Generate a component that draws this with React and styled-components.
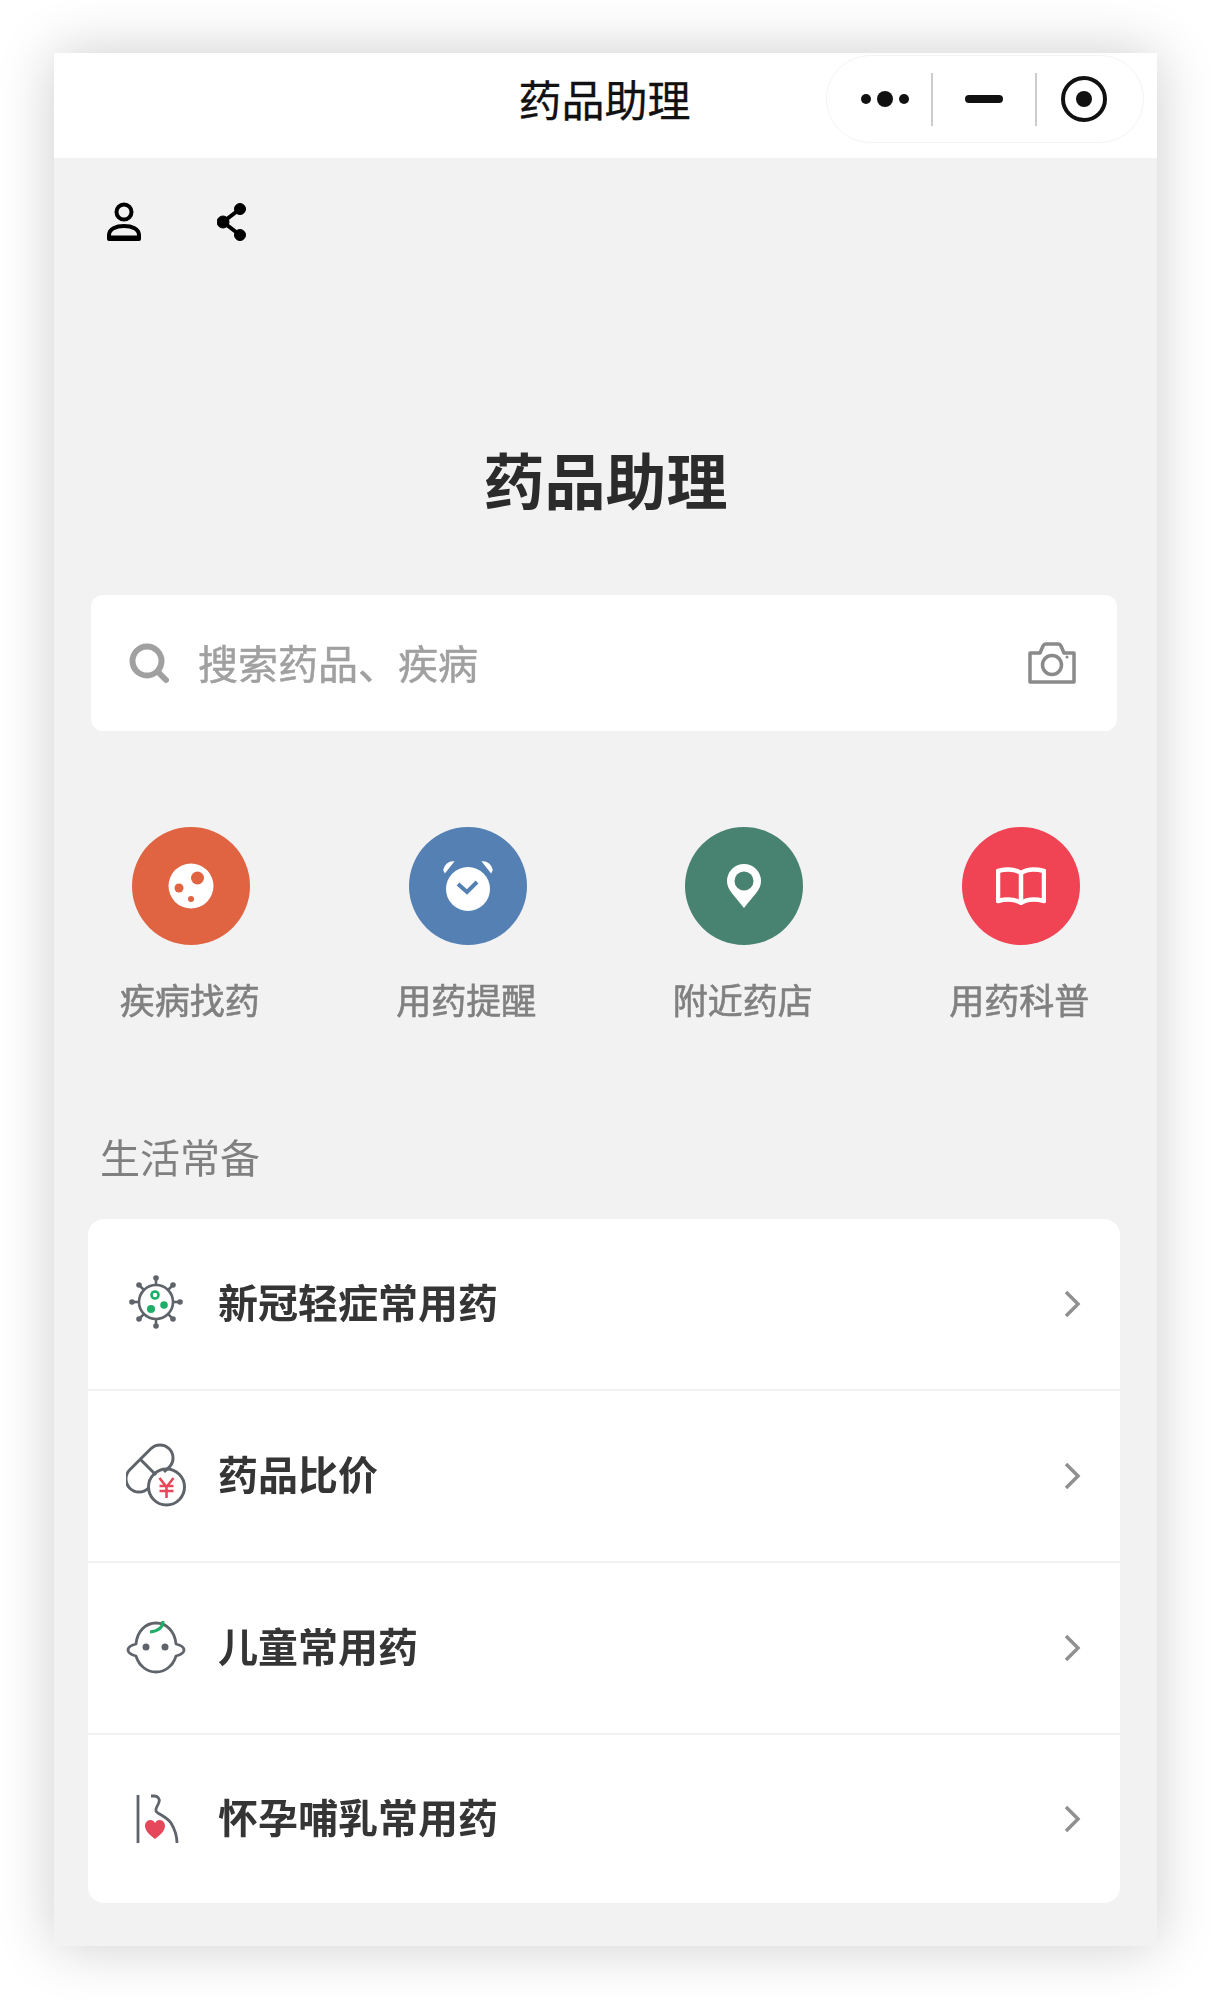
import React from "react";
import styled, { createGlobalStyle } from "styled-components";

const Global = createGlobalStyle`
  html, body { margin: 0; padding: 0; background: #fff; }
  body { font-family: "Noto Sans CJK SC", "Noto Sans", sans-serif; }
  * { box-sizing: border-box; }
`;

const Page = styled.div`
  height: 2000px;
  padding: 53px 54px 0;
  overflow: hidden;
  filter: blur(0.6px);
`;

const Phone = styled.div`
  width: 1103px;
  height: 1893px;
  background: #f2f2f2;
  box-shadow: 0 0 54px rgba(0, 0, 0, 0.2);
`;

const Header = styled.header`
  position: relative;
  height: 105px;
  background: #fff;
  display: flex;
  align-items: center;
  justify-content: center;
`;

const HeaderTitle = styled.h1`
  margin: 0;
  padding: 0 2px 16px 0;
  font-size: 43px;
  font-weight: 400;
  line-height: 60px;
  color: #111;
  -webkit-text-stroke: 0.3px #111;
`;

const Capsule = styled.div`
  position: absolute;
  left: 772px;
  top: 2px;
  width: 318px;
  height: 88px;
  border: 1px solid #f4f4f4;
  border-radius: 44px;
  display: flex;
  align-items: center;
`;

const CapsuleCell = styled.div`
  width: ${(p) => p.$w}px;
  height: 53px;
  padding-left: ${(p) => p.$pad || 0}px;
  display: flex;
  align-items: center;
  justify-content: center;
  border-right: ${(p) => (p.$line ? "2px solid #ccc" : "none")};
  svg { display: block; }
`;

const Content = styled.main`
  display: flex;
  flex-direction: column;
`;

const TopIcons = styled.div`
  display: flex;
  gap: 75px;
  padding: 44px 0 0 52px;
  height: 84px;
`;

const Heading = styled.h2`
  margin: 197px 0 0;
  text-align: center;
  font-size: 61px;
  line-height: 80px;
  font-weight: 700;
  color: #2b2b2b;
`;

const SearchBar = styled.div`
  margin: 76px 0 0 37px;
  width: 1026px;
  height: 136px;
  background: #fff;
  border-radius: 12px;
  display: flex;
  align-items: center;
  padding: 0 40px 0 38px;
`;

const SearchText = styled.span`
  flex: 1;
  margin-left: 29px;
  padding-bottom: 2px;
  font-size: 40px;
  line-height: 56px;
  color: #a0a0a0;
  -webkit-text-stroke: 0.5px #a0a0a0;
`;

const Shortcuts = styled.nav`
  margin: 96px 0 0 -1px;
  display: grid;
  grid-template-columns: repeat(4, 276.5px);
`;

const Shortcut = styled.div`
  display: flex;
  flex-direction: column;
  align-items: center;
`;

const Circle = styled.div`
  width: 118px;
  height: 118px;
  border-radius: 50%;
  background: ${(p) => p.$color};
  display: flex;
  align-items: center;
  justify-content: center;
`;

const ShortcutLabel = styled.span`
  margin-top: 29px;
  padding-right: 3px;
  font-size: 35px;
  line-height: 50px;
  font-weight: 400;
  color: #808080;
  -webkit-text-stroke: 0.6px #808080;
`;

const SectionTitle = styled.h3`
  margin: 107px 0 0 46px;
  font-size: 40px;
  line-height: 50px;
  font-weight: 400;
  color: #808080;
`;

const Card = styled.section`
  margin: 38px 0 0 34px;
  width: 1032px;
  background: #fff;
  border-radius: 16px;
`;

const Row = styled.div`
  height: 172px;
  display: flex;
  align-items: center;
  padding: 0 38px;
  border-top: 2px solid #f2f2f2;

  &:first-child {
    height: 170px;
    border-top: none;
  }

  &:last-child {
    height: 170px;
  }
`;

const RowIcon = styled.div`
  width: 60px;
  height: 68px;
  margin-right: 32px;
  display: flex;
  align-items: center;
  justify-content: center;
`;

const RowLabel = styled.span`
  flex: 1;
  padding-bottom: 6px;
  font-size: 40px;
  line-height: 56px;
  font-weight: 700;
  color: #353535;
`;

const Person = () => (
  <svg width="36" height="40" viewBox="0 0 36 40" fill="none" stroke="#000" strokeWidth="4">
    <circle cx="18" cy="10" r="7.500" />
    <path d="M3 37v-4c0-6 7-9 15-9s15 3 15 9v4z" strokeLinejoin="round" />
    <path d="M3 36h30" strokeWidth="5" />
  </svg>
);

const Share = () => (
  <svg width="30" height="40" viewBox="0 0 30 40" fill="#000" stroke="#000">
    <path d="M23 7 6 20l17 13" fill="none" strokeWidth="4" />
    <circle cx="23" cy="7" r="5.500" />
    <circle cx="6" cy="20" r="6" />
    <circle cx="23" cy="33" r="5.500" />
  </svg>
);

const SearchIcon = () => (
  <svg width="40" height="42" viewBox="0 0 40 42" fill="none" stroke="#a0a0a0">
    <circle cx="18" cy="19" r="14.500" strokeWidth="6" />
    <path d="M29 30l8 8" strokeWidth="6" strokeLinecap="round" />
  </svg>
);

const Camera = () => (
  <svg width="50" height="44" viewBox="0 0 50 44" fill="none" stroke="#8a8a8a" strokeWidth="3.500">
    <path d="M3 12h10l3-7c.5-1 1-2 3-2h12c2 0 2.500 1 3 2l3 7h10v29H3z" strokeLinejoin="round" />
    <circle cx="25" cy="24" r="9.500" />
    <circle cx="40" cy="16" r="1.500" fill="#8a8a8a" stroke="none" />
  </svg>
);

const Germ = () => (
  <svg width="46" height="46" viewBox="0 0 46 46">
    <circle cx="23" cy="23" r="22.500" fill="#fff" />
    <circle cx="29.500" cy="15" r="6.500" fill="#e06342" />
    <circle cx="11" cy="25" r="4.500" fill="#e06342" />
    <circle cx="23" cy="36" r="3" fill="#e06342" />
  </svg>
);

const Alarm = () => (
  <svg width="52" height="50" viewBox="0 0 52 50">
    <circle cx="26" cy="28" r="22" fill="#fff" />
    <path d="M2 9c1-5 5-8 9-8l-8 10zM50 9c-1-5-5-8-9-8l8 10z" fill="#fff" stroke="#fff" strokeWidth="1.500" />
    <path d="M16 23l9 8 10-10" fill="none" stroke="#5580b3" strokeWidth="4" />
  </svg>
);

const Pin = () => (
  <svg width="36" height="46" viewBox="0 0 36 46">
    <path d="M18 45C8 32 1 27 1 18a17 17 0 0 1 34 0c0 9-7 14-17 27z" fill="#fff" />
    <circle cx="18" cy="18" r="9.500" fill="#488270" />
  </svg>
);

const Book = () => (
  <svg width="50" height="38" viewBox="0 0 50 38" fill="none" stroke="#fff" strokeWidth="4.500" strokeLinejoin="round">
    <path d="M2 4c8-2 17-2 23 2 6-4 15-4 23-2v30c-8-2-17-2-23 2-6-4-15-4-23-2z" />
    <path d="M25 6v30" />
  </svg>
);

const spikes = [
  [30, 4],
  [30, 52],
  [6, 28],
  [54, 28],
  [13, 11],
  [47, 11],
  [13, 45],
  [47, 45],
];

const Virus = () => (
  <svg width="60" height="60" viewBox="0 0 60 60" fill="none" stroke="#5f646b" strokeWidth="2.600">
    <circle cx="30" cy="28" r="17" />
    {spikes.map(([x, y]) => (
      <g key={`${x}-${y}`}>
        <path d={`M${x} ${y}L${x + (30 - x) * 0.3} ${y + (28 - y) * 0.3}`} />
        <circle cx={x} cy={y} r="2.800" fill="#5f646b" stroke="none" />
      </g>
    ))}
    <circle cx="29" cy="21" r="3.500" stroke="#1fae6a" strokeWidth="2.600" />
    <circle cx="25" cy="35" r="4" fill="#1fae6a" stroke="none" />
    <circle cx="38" cy="31" r="3.800" fill="#1fae6a" stroke="none" />
  </svg>
);

const PillYen = () => (
  <svg width="60" height="68" viewBox="0 0 60 68" fill="none" stroke="#5f646b" strokeWidth="3">
    <path d="M38 30l5.200-4.800A13 13 0 0 0 24.800 6.800L3.800 27.800A13 13 0 0 0 22.200 46.200" />
    <path d="M15 18l15 15" />
    <circle cx="40.500" cy="45" r="18" />
    <path d="M33.500 36l7 9 7-9M33.500 44h14M33.500 49h14M40.500 44v12" stroke="#e5485a" strokeWidth="2.600" />
  </svg>
);

const Baby = () => (
  <svg width="60" height="56" viewBox="0 0 60 56" fill="none" stroke="#5f646b" strokeWidth="2.800">
    <path d="M10 24C11 12 19 3 30 3s19 9 20 21c4 1 8 3 8 6s-4 5-8 6c-3 10-11 16-20 16S13 46 10 36c-4-1-8-3-8-6s4-5 8-6z" strokeLinejoin="round" />
    <circle cx="20" cy="27" r="3.500" fill="#5f646b" stroke="none" />
    <circle cx="39" cy="27" r="3.500" fill="#5f646b" stroke="none" />
    <path d="M37 1c0 6-4 10-13 11" stroke="#1fae6a" strokeWidth="3" />
  </svg>
);

const Maternity = () => (
  <svg width="60" height="50" viewBox="-9 0 60 50" fill="none" stroke="#5f646b" strokeWidth="2.800">
    <path d="M3 1v48" />
    <path d="M16 2h3c4 0 6 3 5 6-1 4-4 6-3 9 1 3 10 5 15 12 3 5 6 12 6 20" />
    <path d="M20 45c-5-4-10-8-10-13 0-3 2-6 5.500-6 2 0 3.500 1 4.500 3 1-2 2.500-3 4.500-3 3.500 0 5.500 3 5.500 6 0 5-5 9-10 13z" fill="#e5485a" stroke="none" />
  </svg>
);

const Chevron = () => (
  <svg width="18" height="28" viewBox="0 0 18 28" fill="none" stroke="#909090" strokeWidth="3.500">
    <path d="M2 2l12 12L2 26" />
  </svg>
);

const shortcuts = [
  { label: "疾病找药", color: "#e06342", icon: <Germ /> },
  { label: "用药提醒", color: "#5580b3", icon: <Alarm /> },
  { label: "附近药店", color: "#488270", icon: <Pin /> },
  { label: "用药科普", color: "#f04353", icon: <Book /> },
];

const rows = [
  { label: "新冠轻症常用药", icon: <Virus /> },
  { label: "药品比价", icon: <PillYen /> },
  { label: "儿童常用药", icon: <Baby /> },
  { label: "怀孕哺乳常用药", icon: <Maternity /> },
];

export default function App() {
  return (
    <Page>
      <Global />
      <Phone>
        <Header>
          <HeaderTitle>药品助理</HeaderTitle>
          <Capsule>
            <CapsuleCell $w={106} $line $pad={12}>
              <svg width="48" height="16" viewBox="0 0 48 16" fill="#111">
                <circle cx="5" cy="8" r="5" />
                <circle cx="24" cy="8" r="8" />
                <circle cx="43" cy="8" r="5" />
              </svg>
            </CapsuleCell>
            <CapsuleCell $w={104} $line>
              <svg width="38" height="8" viewBox="0 0 38 8" fill="#111">
                <rect width="38" height="8" rx="4" />
              </svg>
            </CapsuleCell>
            <CapsuleCell $w={94}>
              <svg width="46" height="46" viewBox="0 0 46 46" fill="none" stroke="#111" strokeWidth="4">
                <circle cx="23" cy="23" r="21" />
                <circle cx="23" cy="23" r="8" fill="#111" stroke="none" />
              </svg>
            </CapsuleCell>
          </Capsule>
        </Header>
        <Content>
          <TopIcons>
            <Person />
            <Share />
          </TopIcons>
          <Heading>药品助理</Heading>
          <SearchBar>
            <SearchIcon />
            <SearchText>搜索药品、疾病</SearchText>
            <Camera />
          </SearchBar>
          <Shortcuts>
            {shortcuts.map((s) => (
              <Shortcut key={s.label}>
                <Circle $color={s.color}>{s.icon}</Circle>
                <ShortcutLabel>{s.label}</ShortcutLabel>
              </Shortcut>
            ))}
          </Shortcuts>
          <SectionTitle>生活常备</SectionTitle>
          <Card>
            {rows.map((r) => (
              <Row key={r.label}>
                <RowIcon>{r.icon}</RowIcon>
                <RowLabel>{r.label}</RowLabel>
                <Chevron />
              </Row>
            ))}
          </Card>
        </Content>
      </Phone>
    </Page>
  );
}
